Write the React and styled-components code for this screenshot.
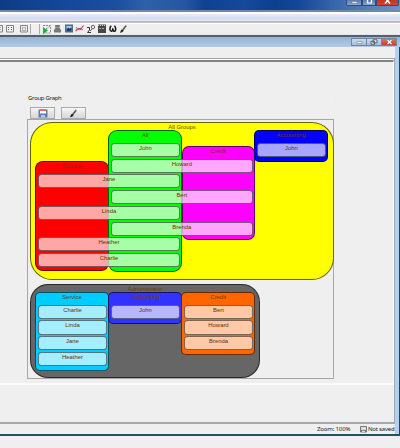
import React from "react";
import styled, { createGlobalStyle } from "styled-components";

const Global = createGlobalStyle`
  *{box-sizing:border-box}
  body{margin:0;background:#efefef;font-family:"Liberation Sans",Arial,sans-serif}
`;
const Screen = styled.main`width:400px;height:448px;overflow:hidden;background:#efefef;display:flex;flex-direction:column;`;
const TitleBar = styled.header`
  height:12px;flex:none;display:flex;justify-content:flex-end;padding-right:1px;
  background:linear-gradient(90deg,#0e3d86 0,#14479a 60px,#1a4f9f 115px,#2f61aa 145px,#2656a2 185px,#10429100 205px),
    linear-gradient(90deg,#0e4190 200px,#15499b 245px,#0d3f8f 275px,#16489a 300px,#426fb0 345px,#6d92c6 400px);
  border-bottom:2px solid #7188a8;
`;
const CaptionButton = styled.div`
  width:${p => p.$w}px;height:6px;border:1px solid #304c78;border-top:0;
  background:${p => p.$red ? "linear-gradient(#b93725,#d5432b)" : "linear-gradient(#577bb0,#86a5ce)"};
  border-radius:0 0 ${p => p.$red ? "2px" : "0"} ${p => p.$first ? "2px" : "0"};
  display:flex;justify-content:center;svg{display:block}
`;
const MenuStrip = styled.div`height:12px;flex:none;border-top:2px solid #fff;border-bottom:1px solid #fff;
  background:linear-gradient(#e9edf7,#d4dcf0 45%,#e0e4f8 6px,#e0e4f8 7px,#b4b4b8 7px,#c8c8c8 9px);`;
const ToolBar = styled.div`height:13px;flex:none;border-bottom:2px solid #56606c;background:linear-gradient(#efefef 10px,#dcdcdc 11px);
  svg{display:block}`;
const FrameTitle = styled.div`height:10px;flex:none;background:linear-gradient(#98b3d1,#b1cbe7);display:flex;justify-content:flex-end;padding:1px 3px 0 0;`;
const FrameButton = styled.div`
  width:${p => p.$w}px;height:8px;border:1px solid #6f86a2;border-left-width:${p => p.$first ? 1 : 0}px;
  background:${p => p.$red ? "linear-gradient(#da7866,#c34127)" : "linear-gradient(#c8dcf0,#a5bfdb)"};
  display:flex;justify-content:center;svg{display:block}
`;
const Frame = styled.div`height:387px;flex:none;border-right:1px solid #104c60;display:flex;background:#efefef;`;
const FrameEdge = styled.div`width:4px;background:#b4d0ee;`;
const FrameBody = styled.div`width:395px;display:flex;flex-direction:column;`;
const SubHeader = styled.div`height:11px;flex:none;`;
const Pane = styled.section`height:366px;flex:none;border-top:1px solid #a2a2a5;border-right:1px solid #a4a7ac;border-bottom:2px solid #a5a8ad;`;
const PaneInner = styled.div`
  height:325px;border-top:2px solid #828287;margin-top:1px;border-right:1px solid #fff;border-bottom:2px solid #fafafa;
  padding:32px 0 0 27px;box-shadow:0 -1px #fff;
`;
const Caption = styled.div`height:13px;padding-left:1px;font:6px/6px "Noto Sans",sans-serif;letter-spacing:-.3px;color:#222;border-top:1px solid #eaf0f2;width:308px;border-right:1px solid #e8edef;`;
const Buttons = styled.div`display:flex;gap:6px;padding-left:3px;height:12px;`;
const Button = styled.div`width:25px;height:12px;border:1px solid #aaa;background:linear-gradient(#f8f8f8,#e5e5e5 50%,#d8d8d8);display:flex;align-items:center;justify-content:center;svg{display:block}`;
const Canvas = styled.div`position:relative;width:307px;height:260px;border:1px solid #a5a6aa;background:#efefef;`;
const Box = styled.div`
  position:absolute;left:${p => p.$b[0] - 28}px;top:${p => p.$b[1] - 120}px;
  width:${p => p.$b[2] - p.$b[0]}px;height:${p => p.$b[3] - p.$b[1]}px;
`;
const Group = styled(Box)`
  border:1px solid #00000099;border-radius:${p => p.$r}px;background:${p => p.$fill};
  text-align:center;color:#6b3e00;font-size:5.9px;line-height:8px;white-space:nowrap;
`;
const Member = styled(Box)`
  border:1px solid #00000080;border-radius:3.5px;background:rgba(255,255,255,.65);
  text-align:center;color:#683000;font-size:5.9px;line-height:8px;
`;
const Status = styled.footer`height:10px;display:flex;justify-content:flex-end;align-items:center;font:6px/10px "Noto Sans",sans-serif;letter-spacing:-.15px;color:#222;`;
const Zoom = styled.span`width:43px;white-space:nowrap;`;
const Saved = styled.span`width:35px;display:flex;align-items:center;gap:1px;white-space:nowrap;letter-spacing:-.2px;svg{flex:none}`;
const Bottom = styled.div`height:14px;flex:none;border-top:2px solid #245064;background:#efefef;`;

const GROUPS = [
  ["All Groups", [30, 122, 334, 279.5], "#ff0", 22],
  ["Service", [35, 161.4, 109, 271.5], "#f00", 8],
  ["Credit", [181.5, 146, 255.2, 240], "#f0f", 7],
  ["All", [108.3, 130, 182.2, 271.5], "#0f0", 9],
  ["Accounting", [254.2, 130, 328.2, 162], "#00f", 5],
  ["Administrator", [30, 284, 260.3, 378], "#666", 18],
  ["Service", [35, 292, 109, 370.8], "#0cf", 5],
  ["Accounting", [108.3, 292, 182.2, 323.6], "#33f", 5],
  ["Credit", [181.3, 292, 255.2, 354.8], "#f60", 5],
];
const MEMBERS = [
  ["John", 111, 180, 143], ["Howard", 111, 252.7, 159], ["Jane", 38, 180, 174],
  ["Bert", 111, 252.7, 190], ["Linda", 38, 180, 206], ["Brenda", 111, 252.7, 221.5],
  ["Heather", 38, 180, 237], ["Charlie", 38, 180, 252.5], ["John", 257, 325.7, 143],
  ["Charlie", 38, 107, 304.6], ["Linda", 38, 107, 320.3], ["Jane", 38, 107, 336], ["Heather", 38, 107, 351.5],
  ["John", 111, 180, 304.6], ["Bert", 184, 253, 304.6], ["Howard", 184, 253, 320.3], ["Brenda", 184, 253, 336],
];

const Brush = () => (
  <svg width="9" height="9" viewBox="0 0 9 9"><path d="M4 5.2 7.2 1" stroke="#57504c" strokeWidth="1.5" /><path d="m6.2.8 1.7 1.4" stroke="#e3a35c" strokeWidth="1" /><path d="M1 8.3c.5-1 .8-3 2.3-3.5l1.3 1C4.4 7.4 3 8.3 1 8.3" fill="#222" /></svg>
);
const Disk = () => (
  <svg width="10" height="9" viewBox="0 0 10 9"><path fill="#557fb5" d="M.5.5h9v8h-9z" /><path fill="#fff" d="M2 1h6v3.5H2z" /><path fill="#e24a38" d="M2 .5h6v1.3H2z" /><path fill="#b9c6d6" d="M3 6h4v2.5H3z" /></svg>
);
const SmallDisk = () => <svg width="7" height="7" viewBox="0 0 7 7"><path fill="#ddd" stroke="#777" d="M.5.5h6v5.5h-6z" /><path fill="#777" d="M1 4h5v2H1z" /><path fill="#ddd" d="M2 4.8h3V6H2z" /></svg>;
const ToolIcons = () => (
  <svg width="140" height="11" viewBox="0 24 140 11" fill="none">
    <g stroke="#858585"><path d="M-3 25.5h5.5v6.5H-3M6.5 25.5h7V32h-7zM20.5 25.5h7V32h-7z" /><path stroke="#666" strokeDasharray="1 1" d="M0 27v4M8.5 27v4M11.5 27v4" /><path stroke="#aaa" d="M22.5 27.5h3v3h-3z" /><path stroke="#aaa" d="M30.5 24v10M39.5 24v10" /></g>
    <path stroke="#888" strokeDasharray="2 1" d="M43 25.5h7.5v7.5H43M50 26l-4 3" /><path fill="#12b82b" d="m43 27 5 3.5-5 3.5z" />
    <path fill="#777" d="M55 25h5l-.5 3 1.5 2v2.5h-7V30l1.5-2z" /><path stroke="#999" d="M56 27.5h3" />
    <path fill="#4c6c93" d="M65 24.5h8v8h-8z" /><path fill="#a7cdf0" d="M66.5 26h5v5h-5z" /><path fill="#203e65" d="m66.5 29 2-1.5 1 1 2-1V31h-5z" />
    <path stroke="#4c88cc" d="m76 27 2 3 2-2 3 2" /><path stroke="#e23b3b" strokeWidth="1.2" d="m75.5 31 3-2.5 2 1 3-4" />
    <path stroke="#333" d="M87 27.5h2.5V30l-2 2.5H91" /><circle cx="93" cy="27" r="1.7" stroke="#666" /><path stroke="#555" d="m90 31 2-2" />
    <path fill="#484848" d="M98 24.5h8v8.5h-8z" /><path stroke="#d5d5d5" strokeDasharray="1 1" d="M98 25.5h8" /><path stroke="#aaa" strokeDasharray="2 1" d="M99 28.5h6" />
    <path stroke="#151515" strokeWidth="1.5" d="M111.2 25.8c-2 1.7-1.5 5.5.2 5.5 1.1 0 1.4-1 1.4-3 0 2 .4 3 1.4 3 1.8 0 2.2-3.8.2-5.5" />
    <g transform="translate(119 24.5)"><path d="M4 5.2 7.2 1" stroke="#57504c" strokeWidth="1.5" /><path d="m6.2.8 1.7 1.4" stroke="#e3a35c" /><path d="M1 8.3c.5-1 .8-3 2.3-3.5l1.3 1C4.4 7.4 3 8.3 1 8.3" fill="#222" /></g>
  </svg>
);
const MinIcon = () => <svg width="7" height="6" viewBox="0 0 7 6"><path d="M1 2.5h5v2H1z" fill="#fff" stroke="#666" strokeWidth=".5" /></svg>;
const RestoreIcon = () => <svg width="8" height="6" viewBox="0 0 8 6"><path d="M3 .8h4v3H3zM1 2.3h3.5v3H1z" fill="#eee" stroke="#555" strokeWidth=".9" /></svg>;
const CloseIcon = () => <svg width="7" height="6" viewBox="0 0 7 6"><path d="m1.5 1 4 4m0-4-4 4" stroke="#6a6265" strokeWidth="2.2" /><path d="m1.5 1 4 4m0-4-4 4" stroke="#fff" strokeWidth="1.3" /></svg>;
const MaxIcon = () => <svg width="7" height="6" viewBox="0 0 7 6"><path d="M1.5-1h4v4h-4z" fill="none" stroke="#fff" strokeWidth="1.2" /></svg>;
const TopMinIcon = () => <svg width="7" height="6" viewBox="0 0 7 6"><path d="M1 1.5h5v1.7H1z" fill="#fff" stroke="#555" strokeWidth=".4" /></svg>;
const TopCloseIcon = () => <svg width="7" height="6" viewBox="0 0 7 6"><path d="M1 3.5 5 -1M2-1l4 4.5" stroke="#fff" strokeWidth="1.6" /></svg>;

export default function App() {
  return (
    <Screen>
      <Global />
      <TitleBar>
        <CaptionButton $w={16} $first><TopMinIcon /></CaptionButton>
        <CaptionButton $w={14}><MaxIcon /></CaptionButton>
        <CaptionButton $w={23} $red><TopCloseIcon /></CaptionButton>
      </TitleBar>
      <MenuStrip />
      <ToolBar><ToolIcons /></ToolBar>
      <FrameTitle>
        <FrameButton $w={16} $first><MinIcon /></FrameButton>
        <FrameButton $w={15}><RestoreIcon /></FrameButton>
        <FrameButton $w={15} $red><CloseIcon /></FrameButton>
      </FrameTitle>
      <Frame>
        <FrameBody>
          <SubHeader />
          <Pane>
            <PaneInner>
              <Caption>Group Graph</Caption>
              <Buttons><Button><Disk /></Button><Button><Brush /></Button></Buttons>
              <Canvas>
                {GROUPS.map(([name, b, fill, r], i) => <Group key={i} $b={b} $fill={fill} $r={r}>{name}</Group>)}
                {MEMBERS.map(([name, x, x2, y], i) => <Member key={i} $b={[x, y, x2, y + 14.4]}>{name}</Member>)}
              </Canvas>
            </PaneInner>
          </Pane>
          <Status><Zoom>Zoom: 100%</Zoom><Saved><SmallDisk />Not saved</Saved></Status>
        </FrameBody>
        <FrameEdge />
      </Frame>
      <Bottom />
    </Screen>
  );
}
